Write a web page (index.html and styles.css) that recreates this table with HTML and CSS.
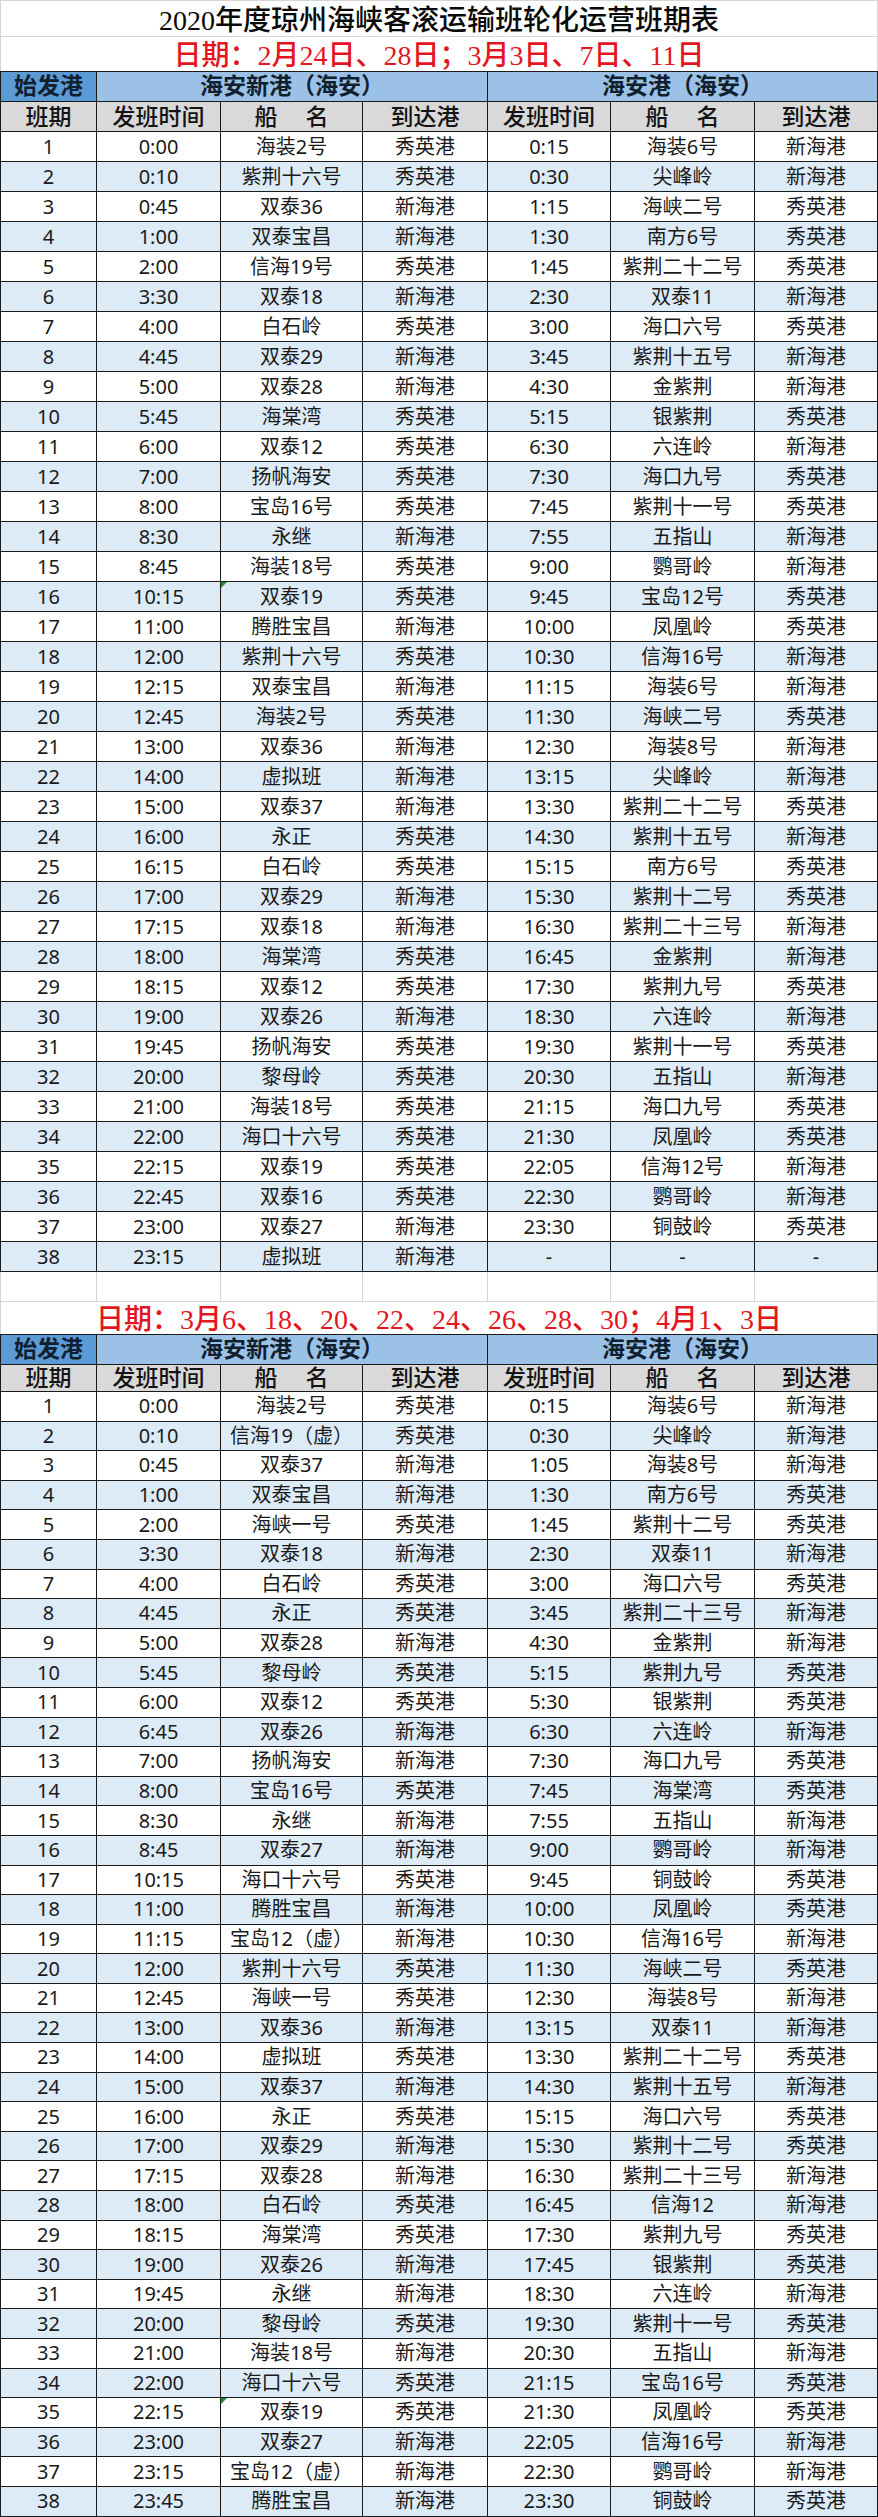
FILE: index.html
```html
<!DOCTYPE html>
<html lang="zh-CN">
<head>
<meta charset="utf-8">
<title>2020年度琼州海峡客滚运输班轮化运营班期表</title>
<link rel="stylesheet" href="styles.css">
</head>
<body>
<div class="sheet">
  <div class="title">2020年度琼州海峡客滚运输班轮化运营班期表</div>
  <div class="date">日期：2月24日、28日；3月3日、7日、11日</div>

  <div class="tbl t1">
    <div class="row head"><span class="origin">始发港</span><span class="port span3">海安新港（海安）</span><span class="port span3">海安港（海安）</span></div>
    <div class="row sub"><span>班期</span><span>发班时间</span><span>船<b class="sp"></b>名</span><span>到达港</span><span>发班时间</span><span>船<b class="sp"></b>名</span><span>到达港</span></div>
    <div class="body">
      <div class="row"><span>1</span><span>0:00</span><span>海装2号</span><span>秀英港</span><span>0:15</span><span>海装6号</span><span>新海港</span></div>
      <div class="row"><span>2</span><span>0:10</span><span>紫荆十六号</span><span>秀英港</span><span>0:30</span><span>尖峰岭</span><span>新海港</span></div>
      <div class="row"><span>3</span><span>0:45</span><span>双泰36</span><span>新海港</span><span>1:15</span><span>海峡二号</span><span>秀英港</span></div>
      <div class="row"><span>4</span><span>1:00</span><span>双泰宝昌</span><span>新海港</span><span>1:30</span><span>南方6号</span><span>秀英港</span></div>
      <div class="row"><span>5</span><span>2:00</span><span>信海19号</span><span>秀英港</span><span>1:45</span><span>紫荆二十二号</span><span>秀英港</span></div>
      <div class="row"><span>6</span><span>3:30</span><span>双泰18</span><span>新海港</span><span>2:30</span><span>双泰11</span><span>新海港</span></div>
      <div class="row"><span>7</span><span>4:00</span><span>白石岭</span><span>秀英港</span><span>3:00</span><span>海口六号</span><span>秀英港</span></div>
      <div class="row"><span>8</span><span>4:45</span><span>双泰29</span><span>新海港</span><span>3:45</span><span>紫荆十五号</span><span>新海港</span></div>
      <div class="row"><span>9</span><span>5:00</span><span>双泰28</span><span>新海港</span><span>4:30</span><span>金紫荆</span><span>新海港</span></div>
      <div class="row"><span>10</span><span>5:45</span><span>海棠湾</span><span>秀英港</span><span>5:15</span><span>银紫荆</span><span>秀英港</span></div>
      <div class="row"><span>11</span><span>6:00</span><span>双泰12</span><span>秀英港</span><span>6:30</span><span>六连岭</span><span>新海港</span></div>
      <div class="row"><span>12</span><span>7:00</span><span>扬帆海安</span><span>秀英港</span><span>7:30</span><span>海口九号</span><span>秀英港</span></div>
      <div class="row"><span>13</span><span>8:00</span><span>宝岛16号</span><span>秀英港</span><span>7:45</span><span>紫荆十一号</span><span>秀英港</span></div>
      <div class="row"><span>14</span><span>8:30</span><span>永继</span><span>新海港</span><span>7:55</span><span>五指山</span><span>新海港</span></div>
      <div class="row"><span>15</span><span>8:45</span><span>海装18号</span><span>秀英港</span><span>9:00</span><span>鹦哥岭</span><span>新海港</span></div>
      <div class="row"><span>16</span><span>10:15</span><span class="flag">双泰19</span><span>秀英港</span><span>9:45</span><span>宝岛12号</span><span>秀英港</span></div>
      <div class="row"><span>17</span><span>11:00</span><span>腾胜宝昌</span><span>新海港</span><span>10:00</span><span>凤凰岭</span><span>秀英港</span></div>
      <div class="row"><span>18</span><span>12:00</span><span>紫荆十六号</span><span>秀英港</span><span>10:30</span><span>信海16号</span><span>新海港</span></div>
      <div class="row"><span>19</span><span>12:15</span><span>双泰宝昌</span><span>新海港</span><span>11:15</span><span>海装6号</span><span>新海港</span></div>
      <div class="row"><span>20</span><span>12:45</span><span>海装2号</span><span>秀英港</span><span>11:30</span><span>海峡二号</span><span>秀英港</span></div>
      <div class="row"><span>21</span><span>13:00</span><span>双泰36</span><span>新海港</span><span>12:30</span><span>海装8号</span><span>新海港</span></div>
      <div class="row"><span>22</span><span>14:00</span><span>虚拟班</span><span>新海港</span><span>13:15</span><span>尖峰岭</span><span>新海港</span></div>
      <div class="row"><span>23</span><span>15:00</span><span>双泰37</span><span>新海港</span><span>13:30</span><span>紫荆二十二号</span><span>秀英港</span></div>
      <div class="row"><span>24</span><span>16:00</span><span>永正</span><span>秀英港</span><span>14:30</span><span>紫荆十五号</span><span>新海港</span></div>
      <div class="row"><span>25</span><span>16:15</span><span>白石岭</span><span>秀英港</span><span>15:15</span><span>南方6号</span><span>秀英港</span></div>
      <div class="row"><span>26</span><span>17:00</span><span>双泰29</span><span>新海港</span><span>15:30</span><span>紫荆十二号</span><span>秀英港</span></div>
      <div class="row"><span>27</span><span>17:15</span><span>双泰18</span><span>新海港</span><span>16:30</span><span>紫荆二十三号</span><span>新海港</span></div>
      <div class="row"><span>28</span><span>18:00</span><span>海棠湾</span><span>秀英港</span><span>16:45</span><span>金紫荆</span><span>新海港</span></div>
      <div class="row"><span>29</span><span>18:15</span><span>双泰12</span><span>秀英港</span><span>17:30</span><span>紫荆九号</span><span>秀英港</span></div>
      <div class="row"><span>30</span><span>19:00</span><span>双泰26</span><span>新海港</span><span>18:30</span><span>六连岭</span><span>新海港</span></div>
      <div class="row"><span>31</span><span>19:45</span><span>扬帆海安</span><span>秀英港</span><span>19:30</span><span>紫荆十一号</span><span>秀英港</span></div>
      <div class="row"><span>32</span><span>20:00</span><span>黎母岭</span><span>秀英港</span><span>20:30</span><span>五指山</span><span>新海港</span></div>
      <div class="row"><span>33</span><span>21:00</span><span>海装18号</span><span>秀英港</span><span>21:15</span><span>海口九号</span><span>秀英港</span></div>
      <div class="row"><span>34</span><span>22:00</span><span>海口十六号</span><span>秀英港</span><span>21:30</span><span>凤凰岭</span><span>秀英港</span></div>
      <div class="row"><span>35</span><span>22:15</span><span>双泰19</span><span>秀英港</span><span>22:05</span><span>信海12号</span><span>新海港</span></div>
      <div class="row"><span>36</span><span>22:45</span><span>双泰16</span><span>秀英港</span><span>22:30</span><span>鹦哥岭</span><span>新海港</span></div>
      <div class="row"><span>37</span><span>23:00</span><span>双泰27</span><span>新海港</span><span>23:30</span><span>铜鼓岭</span><span>秀英港</span></div>
      <div class="row"><span>38</span><span>23:15</span><span>虚拟班</span><span>新海港</span><span>-</span><span>-</span><span>-</span></div>
    </div>
  </div>

  <div class="blank"><div class="row"><span></span><span></span><span></span><span></span><span></span><span></span><span></span></div></div>

  <div class="date date2">日期：3月6、18、20、22、24、26、28、30；4月1、3日</div>

  <div class="tbl t2">
    <div class="row head"><span class="origin">始发港</span><span class="port span3">海安新港（海安）</span><span class="port span3">海安港（海安）</span></div>
    <div class="row sub"><span>班期</span><span>发班时间</span><span>船<b class="sp"></b>名</span><span>到达港</span><span>发班时间</span><span>船<b class="sp"></b>名</span><span>到达港</span></div>
    <div class="body">
      <div class="row"><span>1</span><span>0:00</span><span>海装2号</span><span>秀英港</span><span>0:15</span><span>海装6号</span><span>新海港</span></div>
      <div class="row"><span>2</span><span>0:10</span><span>信海19（虚）</span><span>秀英港</span><span>0:30</span><span>尖峰岭</span><span>新海港</span></div>
      <div class="row"><span>3</span><span>0:45</span><span>双泰37</span><span>新海港</span><span>1:05</span><span>海装8号</span><span>新海港</span></div>
      <div class="row"><span>4</span><span>1:00</span><span>双泰宝昌</span><span>新海港</span><span>1:30</span><span>南方6号</span><span>秀英港</span></div>
      <div class="row"><span>5</span><span>2:00</span><span>海峡一号</span><span>秀英港</span><span>1:45</span><span>紫荆十二号</span><span>秀英港</span></div>
      <div class="row"><span>6</span><span>3:30</span><span>双泰18</span><span>新海港</span><span>2:30</span><span>双泰11</span><span>新海港</span></div>
      <div class="row"><span>7</span><span>4:00</span><span>白石岭</span><span>秀英港</span><span>3:00</span><span>海口六号</span><span>秀英港</span></div>
      <div class="row"><span>8</span><span>4:45</span><span>永正</span><span>秀英港</span><span>3:45</span><span>紫荆二十三号</span><span>新海港</span></div>
      <div class="row"><span>9</span><span>5:00</span><span>双泰28</span><span>新海港</span><span>4:30</span><span>金紫荆</span><span>新海港</span></div>
      <div class="row"><span>10</span><span>5:45</span><span>黎母岭</span><span>秀英港</span><span>5:15</span><span>紫荆九号</span><span>秀英港</span></div>
      <div class="row"><span>11</span><span>6:00</span><span>双泰12</span><span>秀英港</span><span>5:30</span><span>银紫荆</span><span>秀英港</span></div>
      <div class="row"><span>12</span><span>6:45</span><span>双泰26</span><span>新海港</span><span>6:30</span><span>六连岭</span><span>新海港</span></div>
      <div class="row"><span>13</span><span>7:00</span><span>扬帆海安</span><span>新海港</span><span>7:30</span><span>海口九号</span><span>秀英港</span></div>
      <div class="row"><span>14</span><span>8:00</span><span>宝岛16号</span><span>秀英港</span><span>7:45</span><span>海棠湾</span><span>秀英港</span></div>
      <div class="row"><span>15</span><span>8:30</span><span>永继</span><span>新海港</span><span>7:55</span><span>五指山</span><span>新海港</span></div>
      <div class="row"><span>16</span><span>8:45</span><span>双泰27</span><span>新海港</span><span>9:00</span><span>鹦哥岭</span><span>新海港</span></div>
      <div class="row"><span>17</span><span>10:15</span><span>海口十六号</span><span>秀英港</span><span>9:45</span><span>铜鼓岭</span><span>秀英港</span></div>
      <div class="row"><span>18</span><span>11:00</span><span>腾胜宝昌</span><span>新海港</span><span>10:00</span><span>凤凰岭</span><span>秀英港</span></div>
      <div class="row"><span>19</span><span>11:15</span><span>宝岛12（虚）</span><span>新海港</span><span>10:30</span><span>信海16号</span><span>新海港</span></div>
      <div class="row"><span>20</span><span>12:00</span><span>紫荆十六号</span><span>秀英港</span><span>11:30</span><span>海峡二号</span><span>秀英港</span></div>
      <div class="row"><span>21</span><span>12:45</span><span>海峡一号</span><span>秀英港</span><span>12:30</span><span>海装8号</span><span>新海港</span></div>
      <div class="row"><span>22</span><span>13:00</span><span>双泰36</span><span>新海港</span><span>13:15</span><span>双泰11</span><span>新海港</span></div>
      <div class="row"><span>23</span><span>14:00</span><span>虚拟班</span><span>秀英港</span><span>13:30</span><span>紫荆二十二号</span><span>秀英港</span></div>
      <div class="row"><span>24</span><span>15:00</span><span>双泰37</span><span>新海港</span><span>14:30</span><span>紫荆十五号</span><span>新海港</span></div>
      <div class="row"><span>25</span><span>16:00</span><span>永正</span><span>秀英港</span><span>15:15</span><span>海口六号</span><span>秀英港</span></div>
      <div class="row"><span>26</span><span>17:00</span><span>双泰29</span><span>新海港</span><span>15:30</span><span>紫荆十二号</span><span>秀英港</span></div>
      <div class="row"><span>27</span><span>17:15</span><span>双泰28</span><span>新海港</span><span>16:30</span><span>紫荆二十三号</span><span>新海港</span></div>
      <div class="row"><span>28</span><span>18:00</span><span>白石岭</span><span>秀英港</span><span>16:45</span><span>信海12</span><span>新海港</span></div>
      <div class="row"><span>29</span><span>18:15</span><span>海棠湾</span><span>秀英港</span><span>17:30</span><span>紫荆九号</span><span>秀英港</span></div>
      <div class="row"><span>30</span><span>19:00</span><span>双泰26</span><span>新海港</span><span>17:45</span><span>银紫荆</span><span>秀英港</span></div>
      <div class="row"><span>31</span><span>19:45</span><span>永继</span><span>新海港</span><span>18:30</span><span>六连岭</span><span>新海港</span></div>
      <div class="row"><span>32</span><span>20:00</span><span>黎母岭</span><span>秀英港</span><span>19:30</span><span>紫荆十一号</span><span>秀英港</span></div>
      <div class="row"><span>33</span><span>21:00</span><span>海装18号</span><span>新海港</span><span>20:30</span><span>五指山</span><span>新海港</span></div>
      <div class="row"><span>34</span><span>22:00</span><span>海口十六号</span><span>秀英港</span><span>21:15</span><span>宝岛16号</span><span>秀英港</span></div>
      <div class="row"><span>35</span><span>22:15</span><span class="flag">双泰19</span><span>秀英港</span><span>21:30</span><span>凤凰岭</span><span>秀英港</span></div>
      <div class="row"><span>36</span><span>23:00</span><span>双泰27</span><span>新海港</span><span>22:05</span><span>信海16号</span><span>新海港</span></div>
      <div class="row"><span>37</span><span>23:15</span><span>宝岛12（虚）</span><span>新海港</span><span>22:30</span><span>鹦哥岭</span><span>新海港</span></div>
      <div class="row"><span>38</span><span>23:45</span><span>腾胜宝昌</span><span>新海港</span><span>23:30</span><span>铜鼓岭</span><span>秀英港</span></div>
    </div>
  </div>
</div>
</body>
</html>
```

FILE: styles.css
```css
* {
  box-sizing: border-box;
  margin: 0;
  padding: 0;
}

html, body {
  background: #ffffff;
}

body {
  margin: 0;
  width: 878px;
  font-family: "Noto Sans", "Noto Sans CJK SC", sans-serif;
  color: #1a1a1a;
}

.sheet {
  width: 878px;
}

.title {
  height: 37px;
  border: 1px solid #d6d6d6;
  display: flex;
  align-items: center;
  justify-content: center;
  padding-top: 5px;
  font-family: "Liberation Serif", "Noto Sans CJK SC", serif;
  font-size: 28px;
  font-weight: 500;
  line-height: 1;
  color: #0a0a0a;
}

.date {
  height: 34px;
  border-left: 1px solid #d6d6d6;
  border-right: 1px solid #d6d6d6;
  display: flex;
  align-items: center;
  justify-content: center;
  padding-top: 3px;
  font-family: "Liberation Serif", "Noto Sans CJK SC", serif;
  font-size: 28px;
  font-weight: 500;
  line-height: 1;
  color: #e3161f;
}

.date2 {
  height: 32px;
  padding-top: 4px;
}

.tbl {
  border-top: 1px solid #1a1a1a;
  border-left: 1px solid #1a1a1a;
}

.row {
  display: grid;
  grid-template-columns: 96px 124px 142px 125px 123px 144px 123px;
  height: 30px;
}

.row > span {
  display: flex;
  align-items: center;
  justify-content: center;
  border-right: 1px solid #1a1a1a;
  border-bottom: 1px solid #1a1a1a;
  font-size: 20px;
  line-height: 1;
  white-space: nowrap;
}

.span3 {
  grid-column: span 3;
}

.head > span,
.sub > span {
  font-family: "Liberation Serif", "Noto Sans CJK SC", serif;
  font-size: 23px;
  color: #141414;
}

.head > span {
  font-weight: 700;
  color: #10202f;
}

.head .origin {
  background: #5b9bd5;
}

.head .port {
  background: #9bc2e6;
}

.sub > span {
  background: #d9d9d9;
  padding-top: 1px;
  font-weight: 500;
}

.sp {
  display: inline-block;
  width: 28px;
}

.body .row:nth-child(even) > span {
  background: #ddebf7;
}

.t2 .sub {
  height: 27px;
}

.t2 .body .row {
  height: 29.6px;
}

.flag {
  position: relative;
}

.flag::before {
  content: "";
  position: absolute;
  left: 0;
  top: 0;
  border-top: 6px solid #1f8a3a;
  border-right: 6px solid transparent;
}

.blank {
  border-left: 1px solid #d6d6d6;
}

.blank .row > span {
  border-right: 1px solid #d6d6d6;
  border-bottom: 1px solid #d6d6d6;
}
```
